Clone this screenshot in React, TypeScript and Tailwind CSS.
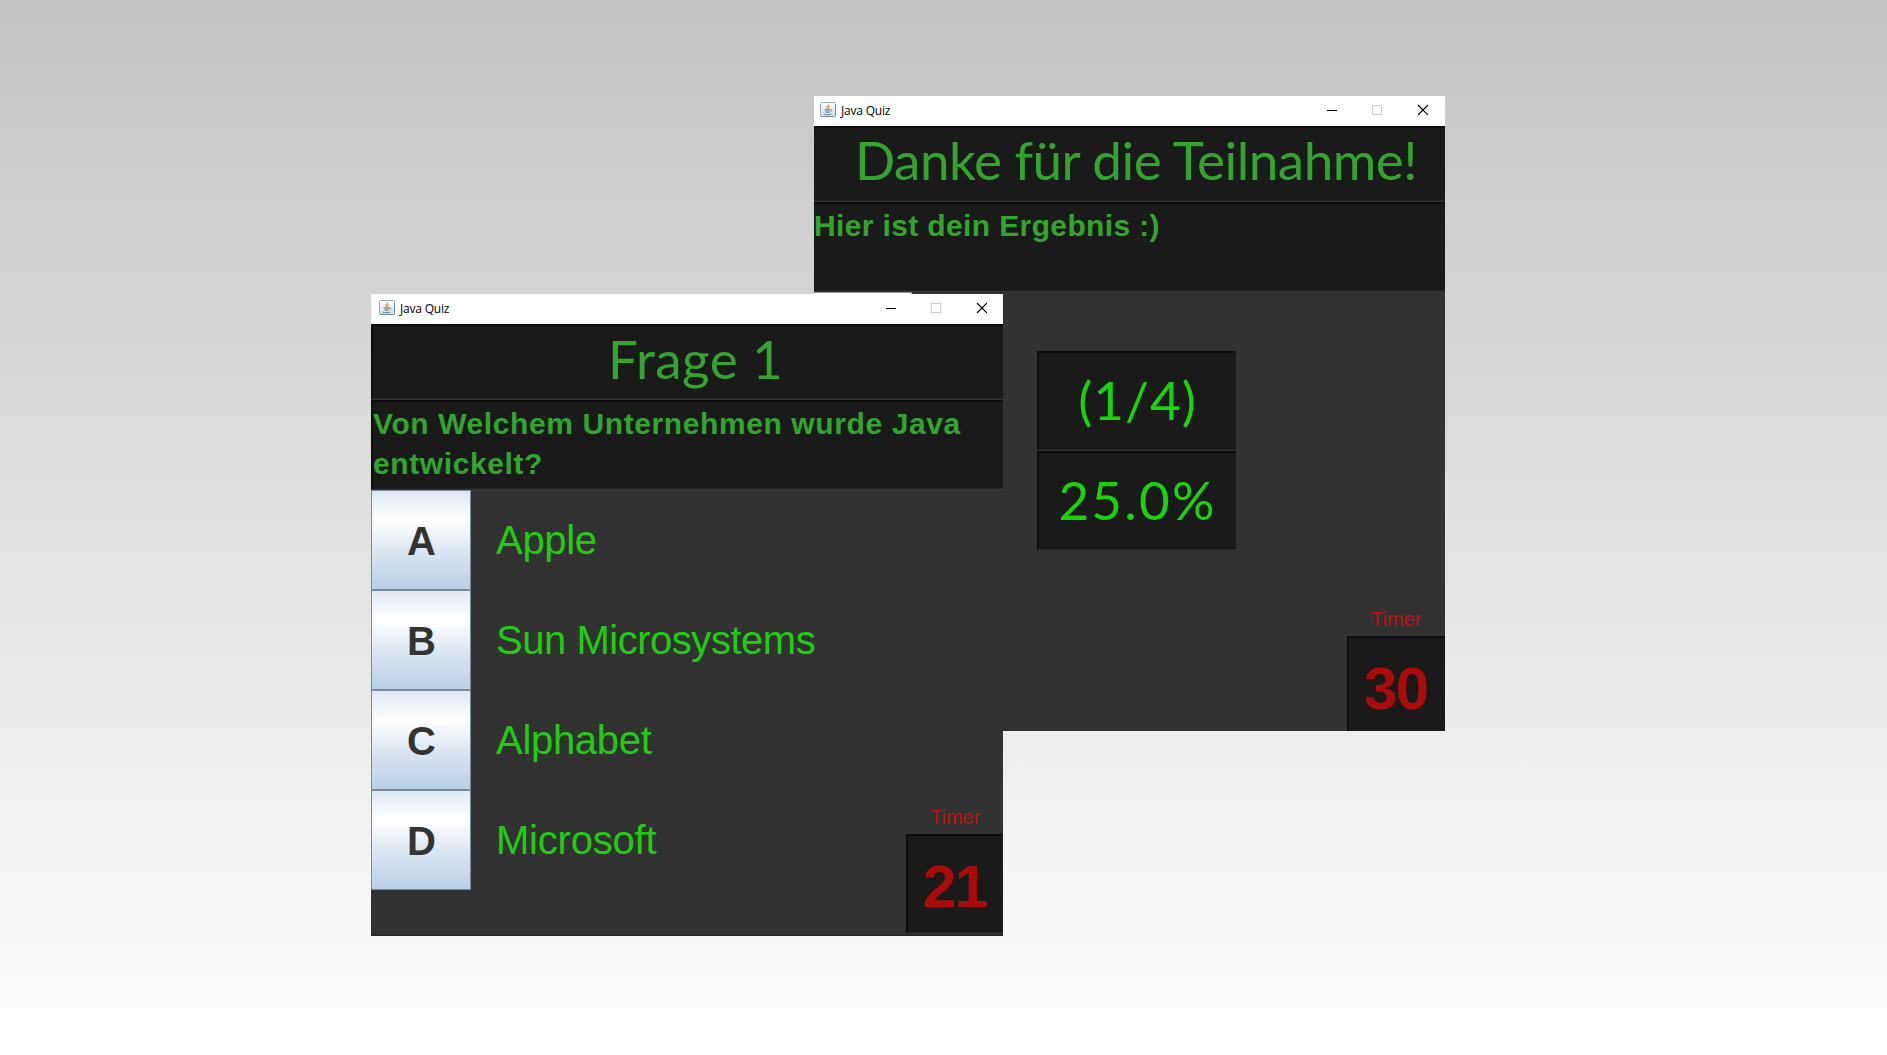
import React from "react";

const ink = "font-['Ink_Free','Lato',sans-serif]";
const edge = "border-t-2 border-t-[#0d0d0d] border-b border-b-[#232323] bg-[#1a1a1a]";
const leftEdge = "border-l-2 border-l-[#0d0d0d]";

function JavaIcon() {
  return (
    <svg width="16" height="16" viewBox="0 0 16 16">
      <defs>
        <linearGradient id="jbg" x1="0" y1="0" x2="0" y2="1">
          <stop offset="0" stopColor="#fdfdfd" />
          <stop offset="1" stopColor="#d5dde5" />
        </linearGradient>
      </defs>
      <rect x="0.5" y="0.5" width="15" height="14" rx="1" fill="url(#jbg)" stroke="#9aaaba" />
      <path d="M1 14.500h14M15.500 3v11" stroke="#6f8ba3" strokeWidth="1" />
      <path d="M8.600 2.200c.5 1.400-2 2.200-1.500 3.600.2.600.7 1 .9 1.400M9.600 4.300c-1 .6-1.600 1.300-.7 2.300" fill="none" stroke="#e8a062" strokeWidth="1.300" />
      <path d="M4.500 7.700h6M5 9h5M5.600 10.300h4M10.500 7.800c2-.5 1.700 1.400.2 1.700M3.400 12c2 .9 6.500.8 8.200-.1" fill="none" stroke="#6b8aa8" strokeWidth="1" />
    </svg>
  );
}

function TitleBar({ back }: { back?: boolean }) {
  return (
    <div className={`flex h-[30px] shrink-0 items-start bg-white ${back ? "pl-1.5" : "pl-2"}`}>
      <div className="pt-1.5">
        <JavaIcon />
      </div>
      <span className="ml-[5px] grow pt-[7px] font-['Segoe_UI','Open_Sans',sans-serif] text-[12px] leading-4 tracking-[-0.2px] text-black">
        Java Quiz
      </span>
      <svg
        width="102"
        height="30"
        viewBox="0 0 102 30"
        className={back ? "mr-[17px]" : "mr-[16px]"}
        shapeRendering="crispEdges"
      >
        <path d="M1 14.500h10" stroke="#000" />
        <rect x="46.500" y="9.500" width="9" height="9" fill="none" stroke="#ccc" />
        <path d="M92 9l10 10M102 9l-10 10" stroke="#000" strokeWidth="1.100" shapeRendering="auto" />
      </svg>
    </div>
  );
}

function TimerBlock({ value }: { value: string }) {
  return (
    <div className="flex flex-col font-['Liberation_Sans',sans-serif]">
      <span className="ml-[24px] h-[25px] text-[20px] leading-[17px] text-[#bd1111]">Timer</span>
      <div
        className={`h-[99px] pl-[15px] text-[60px] font-bold leading-[101px] tracking-[-1.500px] text-[#aa0c0c] ${leftEdge} ${edge}`}
      >
        {value}
      </div>
    </div>
  );
}

function ResultWindow() {
  return (
    <section className="absolute left-[814px] top-[96px] flex h-[635px] w-[631px] flex-col overflow-hidden bg-[#323232]">
      <TitleBar back />
      <h1
        className={`h-[75px] shrink-0 whitespace-nowrap pl-[41px] text-[53px] font-normal leading-[64px] tracking-[-0.500px] text-[#33a52f] ${ink} ${edge}`}
      >
        Danke für die Teilnahme!
      </h1>
      <div
        className={`mt-px h-[89px] shrink-0 pt-[2px] font-['Liberation_Sans',sans-serif] text-[30px] font-bold leading-10 tracking-[0.370px] text-[#33a52f] ${edge}`}
      >
        Hier ist dein Ergebnis :)
      </div>
      <div className="mt-px h-[10px] w-[98px] shrink-0 border-r border-t border-[#999] bg-white" />
      <div className={`ml-[223px] mt-[49px] w-[199px] shrink-0 text-center text-[53px] leading-[93px] text-[#1bd30b] ${ink}`}>
        <div className={`h-[99px] tracking-[1px] ${leftEdge} ${edge}`}>(1/4)</div>
        <div className={`mt-px h-[99px] tracking-[2.200px] ${leftEdge} ${edge}`}>25.0%</div>
      </div>
      <div className="absolute right-0 top-[515px] w-[98px]">
        <TimerBlock value="30" />
      </div>
    </section>
  );
}

const answers = [
  { key: "A", label: "Apple", tracking: "tracking-[-0.300px]" },
  { key: "B", label: "Sun Microsystems", tracking: "tracking-[-0.470px]" },
  { key: "C", label: "Alphabet", tracking: "tracking-[-0.300px]" },
  { key: "D", label: "Microsoft", tracking: "tracking-[-0.200px]" },
];

function QuestionWindow() {
  return (
    <section className="absolute left-[371px] top-[294px] flex h-[642px] w-[632px] flex-col overflow-hidden border-b border-b-[#252525] bg-[#323232]">
      <TitleBar />
      <h1
        className={`h-[75px] shrink-0 whitespace-nowrap pl-[235px] text-[53px] font-normal leading-[66px] tracking-[0.400px] text-[#33a52f] ${ink} ${leftEdge} ${edge}`}
      >
        Frage 1
      </h1>
      <div
        className={`mt-px h-[89px] shrink-0 pt-[2px] font-['Liberation_Sans',sans-serif] text-[30px] font-bold leading-10 tracking-[0.600px] text-[#33a52f] ${leftEdge} ${edge}`}
      >
        Von Welchem Unternehmen wurde Java entwickelt?
      </div>
      <div className="mt-px flex flex-col font-['Liberation_Sans',sans-serif] text-[40px]">
        {answers.map(({ key, label, tracking }) => (
          <div key={key} className="flex h-[100px] items-center">
            <button className="h-[100px] w-[100px] border border-[#7a8a99] bg-[linear-gradient(#dde8f3_0%,#ffffff_30%,#dce7f3_60%,#b8cfe5_100%)] pl-px pt-px font-bold leading-none text-[#333]">
              {key}
            </button>
            <span className={`ml-[25px] leading-none text-[#20cd10] ${tracking}`}>{label}</span>
          </div>
        ))}
      </div>
      <div className="absolute right-0 top-[515px] w-[97px]">
        <TimerBlock value="21" />
      </div>
    </section>
  );
}

export default function App() {
  return (
    <main className="relative h-[1055px] w-[1887px] overflow-hidden bg-[linear-gradient(#c3c3c3,#ffffff)]">
      <ResultWindow />
      <QuestionWindow />
    </main>
  );
}
